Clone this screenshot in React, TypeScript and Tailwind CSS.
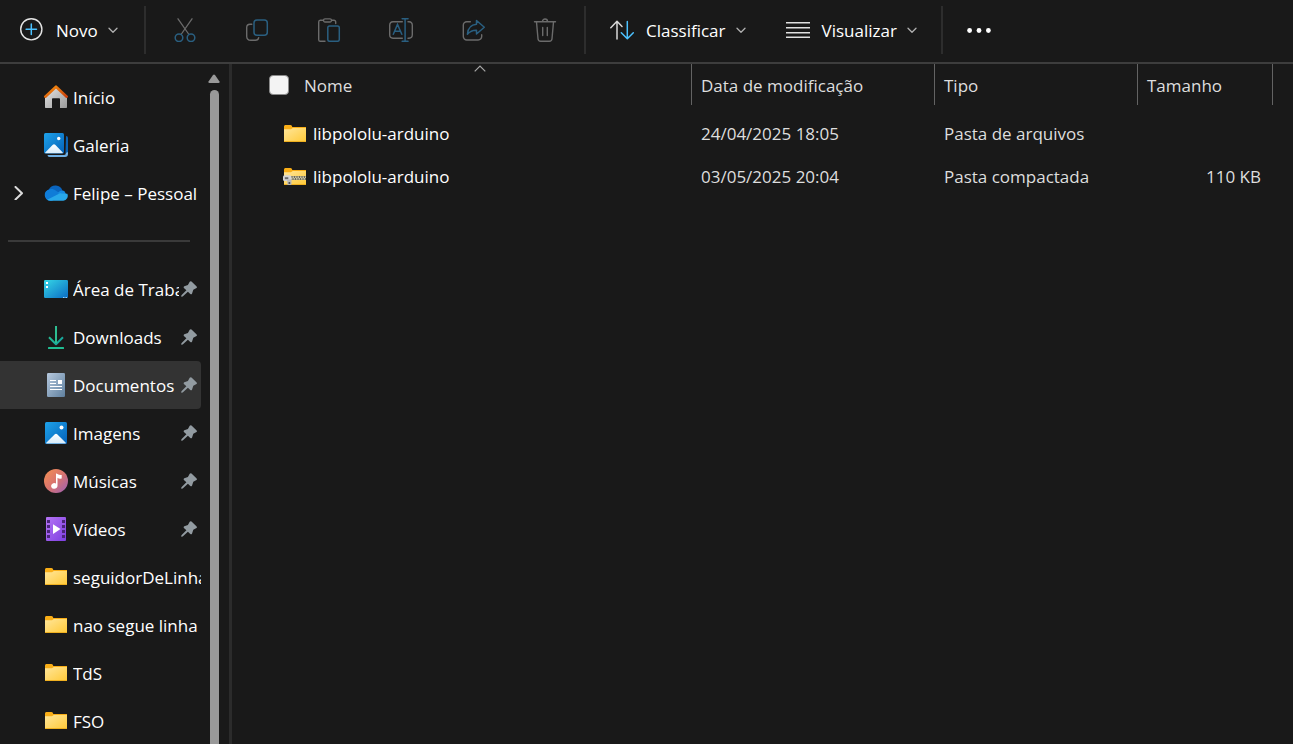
import type { ReactNode } from "react";

const GRAY = "#6b6b6b";
const BLUE = "#2a5f80";

function Gradients() {
  return (
    <svg width="0" height="0" className="absolute" aria-hidden="true">
      <defs>
        <linearGradient id="folder" x1="0" y1="0" x2="1" y2="1">
          <stop offset="0" stopColor="#ffe69a" />
          <stop offset="1" stopColor="#ffc937" />
        </linearGradient>
        <linearGradient id="roof" x1="0" y1="0" x2="1" y2="1">
          <stop offset="0" stopColor="#f9930f" />
          <stop offset="1" stopColor="#c9400c" />
        </linearGradient>
        <linearGradient id="wall" x1="0" y1="0" x2="1" y2="1">
          <stop offset="0" stopColor="#e6e6e6" />
          <stop offset="1" stopColor="#9a9a9a" />
        </linearGradient>
        <linearGradient id="photo" x1="0" y1="0" x2="1" y2="1">
          <stop offset="0" stopColor="#1ea2ea" />
          <stop offset="1" stopColor="#0461b8" />
        </linearGradient>
        <linearGradient id="hill" x1="0" y1="0" x2="0" y2="1">
          <stop offset="0" stopColor="#ffffff" />
          <stop offset="1" stopColor="#d5ebfb" />
        </linearGradient>
        <linearGradient id="desktop" x1="0" y1="0" x2="1" y2="1">
          <stop offset="0" stopColor="#35d6e6" />
          <stop offset="1" stopColor="#0b6cc4" />
        </linearGradient>
        <linearGradient id="download" x1="0" y1="0" x2="1" y2="1">
          <stop offset="0" stopColor="#2fc48a" />
          <stop offset="1" stopColor="#12a0a0" />
        </linearGradient>
        <linearGradient id="doc" x1="0" y1="0" x2="1" y2="1">
          <stop offset="0" stopColor="#b7c9de" />
          <stop offset="1" stopColor="#5f809f" />
        </linearGradient>
        <linearGradient id="music" x1="0" y1="0" x2="1" y2="1">
          <stop offset="0" stopColor="#f59150" />
          <stop offset="0.5" stopColor="#d9746f" />
          <stop offset="1" stopColor="#9a5fb8" />
        </linearGradient>
        <linearGradient id="video" x1="0" y1="0" x2="1" y2="1">
          <stop offset="0" stopColor="#b574f5" />
          <stop offset="1" stopColor="#7d3fe0" />
        </linearGradient>
      </defs>
    </svg>
  );
}

function Icon({ children, size = 24 }: { children: ReactNode; size?: number }) {
  return (
    <svg width={size} height={size} viewBox={`0 0 ${size} ${size}`} fill="none" className="shrink-0" aria-hidden="true">
      {children}
    </svg>
  );
}

const NewIcon = () => (
  <Icon>
    <circle cx="11.3" cy="11.3" r="10.6" stroke="#e4e4e4" strokeWidth="1.4" />
    <path d="M11.300 6.100v10.400M6.100 11.300h10.400" stroke="#4cc2ff" strokeWidth="1.500" strokeLinecap="round" />
  </Icon>
);

const CutIcon = () => (
  <Icon>
    <path d="M5 .8 15.600 16M19 .8 8.400 16" stroke={GRAY} strokeWidth="1.300" strokeLinecap="round" />
    <circle cx="6" cy="19.800" r="3.800" stroke={BLUE} strokeWidth="1.500" />
    <circle cx="18" cy="19.800" r="3.800" stroke={BLUE} strokeWidth="1.500" />
  </Icon>
);

const CopyIcon = () => (
  <Icon>
    <path d="M6.800 6.200H5A3.300 3.300 0 0 0 1.700 9.500V18.500A4 4 0 0 0 5.700 22.300H10.500A3.300 3.300 0 0 0 13.700 19.600" stroke={GRAY} strokeWidth="1.400" strokeLinecap="round" />
    <rect x="9" y="2" width="13.300" height="15.300" rx="3" stroke={BLUE} strokeWidth="1.500" />
  </Icon>
);

const PasteIcon = () => (
  <Icon>
    <path d="M6.500 2.300H3.300A1.700 1.700 0 0 0 1.700 4V21.700A1.700 1.700 0 0 0 3.300 23.300H8M14.500 2.300H17A1.700 1.700 0 0 1 18.700 4V5.500" stroke={GRAY} strokeWidth="1.400" strokeLinecap="round" />
    <rect x="6.500" y=".8" width="8" height="3.200" rx="1.500" stroke={GRAY} strokeWidth="1.300" />
    <rect x="10.800" y="8" width="11.500" height="15.300" rx="1.800" stroke={BLUE} strokeWidth="1.500" />
  </Icon>
);

const RenameIcon = () => (
  <Icon>
    <path d="M13.300 3.800H4A3.500 3.500 0 0 0 .7 7.300V16.700A3.500 3.500 0 0 0 4 20.200H13.300M19 3.800H20A3.500 3.500 0 0 1 23.300 7.300V16.700A3.500 3.500 0 0 1 20 20.200H19" stroke={GRAY} strokeWidth="1.400" strokeLinecap="round" />
    <path d="M4.300 16.300 8.500 6.500 12.800 16.300M5.700 13.200H11.400M13.200 .7H19M16.100 .7V23.300M13.200 23.300H19" stroke={BLUE} strokeWidth="1.500" strokeLinecap="round" />
  </Icon>
);

const ShareIcon = () => (
  <Icon>
    <path d="M9.300 3.800H5.800A3.500 3.500 0 0 0 2.300 7.300V18.500A3.500 3.500 0 0 0 5.800 22H17A3.500 3.500 0 0 0 20.700 18.500V16.700" stroke={GRAY} strokeWidth="1.400" strokeLinecap="round" />
    <path d="M15.500 2.500 23.300 9.300 15.500 16V12.200C11.500 12 9 13.300 6.400 16.200 6.900 10.600 9.900 6.700 15.500 6.300Z" stroke={BLUE} strokeWidth="1.500" strokeLinejoin="round" />
  </Icon>
);

const TrashIcon = () => (
  <Icon>
    <path d="M1.500 3.800H22.500M3.500 4 5 20.800A2.700 2.700 0 0 0 7.700 23.300H16.300A2.700 2.700 0 0 0 19 20.800L20.500 4M9.500 3.500A2.500 2.500 0 0 1 14.500 3.500M9.700 9.500V17.500M14.300 9.500V17.500" stroke={GRAY} strokeWidth="1.400" strokeLinecap="round" />
  </Icon>
);

const SortIcon = () => (
  <Icon>
    <path d="M7 21V3.500M.8 9.700 7 3.300 12 8.500" stroke="#d8d8d8" strokeWidth="1.500" strokeLinecap="round" strokeLinejoin="round" />
    <path d="M17.300 3.500V20.500M11.300 14.700 17.300 20.800 23.300 14.700" stroke="#4cc2ff" strokeWidth="1.500" strokeLinecap="round" strokeLinejoin="round" />
  </Icon>
);

const ViewIcon = () => (
  <Icon>
    <path d="M0 4.700H24M0 9.700H24M0 14.700H24M0 19.300H24" stroke="#e0e0e0" strokeWidth="1.400" />
  </Icon>
);

const MoreIcon = () => (
  <Icon>
    <circle cx="2.600" cy="12.500" r="2.400" fill="#fff" />
    <circle cx="12" cy="12.500" r="2.400" fill="#fff" />
    <circle cx="21.400" cy="12.500" r="2.400" fill="#fff" />
  </Icon>
);

const Chevron = () => (
  <Icon size={10}>
    <path d="M1 3.200 5 7.200 9 3.200" stroke="#b0b0b0" strokeWidth="1.300" strokeLinecap="round" strokeLinejoin="round" />
  </Icon>
);

const HomeIcon = () => (
  <Icon>
    <path d="M1 11.500 12 2 23 11.500V22.300A.7.700 0 0 1 22.300 23H16V14A.8.800 0 0 0 15.200 13.200H8.800A.8.800 0 0 0 8 14V23H1.700A.7.700 0 0 1 1 22.300Z" fill="url(#wall)" />
    <path d="M1.300 11.700 12 1.700 22.700 11.700" stroke="url(#roof)" strokeWidth="2.600" strokeLinecap="round" strokeLinejoin="round" />
  </Icon>
);

const GalleryIcon = () => (
  <Icon>
    <path d="M22 3A2 2 0 0 1 24 5V20H21.500Z" fill="#0c63b4" />
    <path d="M3.500 22H20A1.800 1.800 0 0 0 21.800 20L24 19V21A3 3 0 0 1 21 24H5.500A2 2 0 0 1 3.500 22Z" fill="#6fb0e6" />
    <rect width="20" height="20.500" rx="1.500" fill="url(#photo)" />
    <path d="M1 19.700 8.800 11.800Q10 10.800 11.200 11.800L19 19.700Q18.500 20.300 18 20.300H2Q1.400 20.300 1 19.700Z" fill="url(#hill)" />
    <circle cx="14.700" cy="5.500" r="1.700" fill="#fff" />
  </Icon>
);

const CloudIcon = () => (
  <Icon>
    <path d="M6 19.300A5.700 5.700 0 0 1 4.800 8.500 7.500 7.500 0 0 1 18.500 9.500L12 16Z" fill="#0a64bd" />
    <path d="M5.500 8.500C8 7.600 10 8.300 12 9.800L18.500 14 8 19.800H6A5.700 5.700 0 0 1 5.500 8.500Z" fill="#0f7cd8" />
    <path d="M14 11.800C16 9.300 19 9 20.500 10.300L23 15 15 14Z" fill="#168ae0" />
    <path d="M3.200 18.700 14.500 12.900Q16 12 17.500 12.500L23.300 12.700A5 5 0 0 1 19.300 19.800H6.500A5.500 5.500 0 0 1 3.200 18.700Z" fill="#28a8ea" />
  </Icon>
);

const DesktopIcon = () => (
  <Icon>
    <rect y="3" width="24" height="18" rx="1.200" fill="url(#desktop)" />
    <path d="M2 5h2v2H2zM2 9h2v2H2z" fill="#fff" />
    <path d="M19 20h1.500v1H19zM21.500 20H23v1h-1.500z" fill="#8fd0ff" />
  </Icon>
);

const DownloadIcon = () => (
  <Icon>
    <path d="M12 1V18.500M5 12.300 12 19.300 19 12.300" stroke="url(#download)" strokeWidth="2" strokeLinejoin="round" />
    <rect x="4" y="22" width="16" height="2" rx=".5" fill="#20bd92" />
    <rect x="11" y="1" width="2" height="17" fill="#2dbd91" />
  </Icon>
);

const DocumentIcon = () => (
  <Icon>
    <rect x="3" width="18" height="24" rx="1.300" fill="url(#doc)" />
    <path d="M6 7.500h6M6 10.500h6M6 13.500h12M6 16.500h12" stroke="#fff" strokeWidth="1.100" />
    <rect x="14" y="7" width="4" height="4" fill="#fff" />
  </Icon>
);

const PictureIcon = () => (
  <Icon>
    <rect x="1" y="1" width="22" height="22" rx="1.500" fill="url(#photo)" />
    <path d="M2 22 10.800 13.200Q12 12.200 13.200 13.200L22 22Q21.500 22.500 21 22.500H3Q2.400 22.500 2 22Z" fill="url(#hill)" />
    <circle cx="17.500" cy="6.500" r="2" fill="#fff" />
  </Icon>
);

const MusicIcon = () => (
  <Icon>
    <circle cx="12" cy="12" r="12" fill="url(#music)" />
    <path d="M12 4.500Q12.800 4.200 13.500 5 15 6.200 17.700 6V9.500Q15 10 13.500 8.800V16.800A3.200 2.900 0 1 1 12 14.500Z" fill="#fff" />
  </Icon>
);

const VideoIcon = () => (
  <Icon>
    <rect x="2" width="20" height="24" rx="1" fill="url(#video)" />
    <path d="M3 3h3v3H3zM3 8h3v3H3zM3 13h3v3H3zM3 18h3v3H3zM18 3h3v3h-3zM18 8h3v3h-3zM18 13h3v3h-3zM18 18h3v3h-3z" fill="#4a2579" />
    <path d="M9 7.200 16.500 12 9 17Z" fill="#fff" />
  </Icon>
);

const FolderShape = () => (
  <>
    <path d="M1 4.500Q1 3 2.200 3H7.500Q9 3 9.300 5H23V9H1Z" fill="#f9ae17" />
    <path d="M1 7.200H8L9.800 6H23V19.400Q23 20 22.400 20H1.600Q1 20 1 19.400Z" fill="url(#folder)" />
    <path d="M1 19H23V19.400Q23 20 22.400 20H1.600Q1 20 1 19.400Z" fill="#efb020" />
  </>
);

const FolderIcon = () => (
  <Icon>
    <FolderShape />
  </Icon>
);

const ZipIcon = () => (
  <Icon>
    <FolderShape />
    <rect x="7" y="11" width="16" height="4" fill="#6e6a58" />
    <path d="M7 12.200H23" stroke="#e9e2bd" strokeWidth="1.300" strokeDasharray="1.500 1" />
    <path d="M8 13.900H23" stroke="#e9e2bd" strokeWidth="1.300" strokeDasharray="1.500 1" />
    <rect x="0" y="10.300" width="8.300" height="5.700" rx="1.600" fill="#d5d5d5" />
    <rect x="1.800" y="12.200" width="3.500" height="2" fill="#6b6b6b" />
    <rect x="4.300" y="14.500" width="4.200" height="5.500" rx="1" fill="#bababa" />
    <circle cx="6.400" cy="17.900" r="1" fill="#4c4c4c" />
  </Icon>
);

const PinIcon = () => (
  <Icon size={16}>
    <path d="M8.700.800Q9.500-.2 10.500.6L15.400 5.200Q16.400 6.200 15.500 7L12.300 8.800 11 12.700Q10.300 13.800 9.300 12.900L6.900 10.700 1.700 15.500.2 15.800.4 14.300 5.400 9.200 2.900 6.900Q2.200 5.900 3.300 5.200L6.900 4Z" fill="#929ba1" />
  </Icon>
);

interface NavEntry {
  label: string;
  icon: ReactNode;
  pinned?: boolean;
  active?: boolean;
  expandable?: boolean;
}

const home: NavEntry[] = [
  { label: "Início", icon: <HomeIcon /> },
  { label: "Galeria", icon: <GalleryIcon /> },
  { label: "Felipe – Pessoal", icon: <CloudIcon />, expandable: true },
];

const places: NavEntry[] = [
  { label: "Área de Trabalho", icon: <DesktopIcon />, pinned: true },
  { label: "Downloads", icon: <DownloadIcon />, pinned: true },
  { label: "Documentos", icon: <DocumentIcon />, pinned: true, active: true },
  { label: "Imagens", icon: <PictureIcon />, pinned: true },
  { label: "Músicas", icon: <MusicIcon />, pinned: true },
  { label: "Vídeos", icon: <VideoIcon />, pinned: true },
  { label: "seguidorDeLinha", icon: <FolderIcon /> },
  { label: "nao segue linha", icon: <FolderIcon /> },
  { label: "TdS", icon: <FolderIcon /> },
  { label: "FSO", icon: <FolderIcon /> },
];

function NavItem({ label, icon, pinned, active, expandable }: NavEntry) {
  return (
    <li className={active ? "flex h-12 items-center rounded-r-sm bg-[#333333]" : "flex h-12 items-center"}>
      <span className="flex w-11 shrink-0 pl-3">
        {expandable && (
          <button type="button" aria-label="Expandir" className="flex">
            <Icon size={14}>
              <path d="M3.500 1 10 7.200 3.500 13.500" stroke="#dcdcdc" strokeWidth="2" strokeLinecap="round" strokeLinejoin="round" />
            </Icon>
          </button>
        )}
      </span>
      <a href="#" className="flex min-w-0 flex-1 items-center gap-[5px]">
        {icon}
        <span className="min-w-0 flex-1 overflow-hidden whitespace-nowrap pt-0.5">{label}</span>
      </a>
      {pinned && (
        <span className="shrink-0 pl-0.5 pr-1">
          <PinIcon />
        </span>
      )}
    </li>
  );
}

const Divider = () => <div className="h-12 w-0.5 shrink-0 bg-[#2d2d2d]" />;

const actions: { label: string; icon: ReactNode }[] = [
  { label: "Recortar", icon: <CutIcon /> },
  { label: "Copiar", icon: <CopyIcon /> },
  { label: "Colar", icon: <PasteIcon /> },
  { label: "Renomear", icon: <RenameIcon /> },
  { label: "Compartilhar", icon: <ShareIcon /> },
  { label: "Excluir", icon: <TrashIcon /> },
];

function MenuLabel({ children }: { children: ReactNode }) {
  return (
    <span className="flex items-center gap-[10px]">
      <span className="pt-0.5">{children}</span>
      <Chevron />
    </span>
  );
}

function Toolbar() {
  return (
    <header className="flex h-16 shrink-0 items-center border-b-2 border-[#3d3d3d] pb-0.5 text-white">
      <button type="button" className="flex w-36 items-center gap-3 pl-5">
        <NewIcon />
        <MenuLabel>Novo</MenuLabel>
      </button>
      <Divider />
      <div className="flex px-[3px]">
        {actions.map((a) => (
          <button key={a.label} type="button" aria-label={a.label} className="flex w-18 justify-center">
            {a.icon}
          </button>
        ))}
      </div>
      <Divider />
      <button type="button" className="flex items-center gap-3 pl-6 pr-4">
        <SortIcon />
        <MenuLabel>Classificar</MenuLabel>
      </button>
      <button type="button" className="flex items-center gap-3 px-6">
        <ViewIcon />
        <MenuLabel>Visualizar</MenuLabel>
      </button>
      <Divider />
      <button type="button" aria-label="Ver mais" className="flex w-18 justify-center">
        <MoreIcon />
      </button>
    </header>
  );
}

const files = [
  { name: "libpololu-arduino", date: "24/04/2025 18:05", type: "Pasta de arquivos", size: "", icon: <FolderIcon /> },
  { name: "libpololu-arduino", date: "03/05/2025 20:04", type: "Pasta compactada", size: "110 KB", icon: <ZipIcon /> },
];

function HeaderCell({ children }: { children: ReactNode }) {
  return (
    <th className="p-0 pb-[7px] text-left font-normal">
      <div className="flex h-[41px] items-center border-r border-[#636363] pl-[9px] pt-0.5">{children}</div>
    </th>
  );
}

function FileTable() {
  return (
    <table className="w-full table-fixed border-collapse whitespace-nowrap text-[#dedede]">
      <colgroup>
        <col />
        <col className="w-[243px]" />
        <col className="w-[203px]" />
        <col className="w-[135px]" />
      </colgroup>
      <thead>
        <tr>
          <th className="p-0 pb-[7px] pl-[37px] text-left font-normal">
            <div className="relative flex h-[41px] items-center border-r border-[#636363]">
              <label className="flex items-center gap-[15px]">
                <input
                  type="checkbox"
                  className="size-5 appearance-none rounded border border-[#8a8a8a] bg-[#f3f3f3]"
                />
                <span className="pt-0.5">Nome</span>
              </label>
              <svg width="12" height="7" viewBox="0 0 12 7" fill="none" className="absolute left-1/2 top-px -translate-x-1/2" aria-hidden="true">
                <path d="M.7 6.300 6 1 11.300 6.300" stroke="#a8a8a8" strokeWidth="1.200" />
              </svg>
            </div>
          </th>
          <HeaderCell>Data de modificação</HeaderCell>
          <HeaderCell>Tipo</HeaderCell>
          <HeaderCell>Tamanho</HeaderCell>
        </tr>
      </thead>
      <tbody>
        {files.map((f) => (
          <tr key={f.type} className="h-[43px]">
            <td className="p-0 pl-[51px] text-white">
              <span className="flex items-center gap-[6px]">
                {f.icon}
                {f.name}
              </span>
            </td>
            <td className="p-0 pl-[9px]">{f.date}</td>
            <td className="p-0 pl-[9px]">{f.type}</td>
            <td className="p-0 pr-3 text-right">{f.size}</td>
          </tr>
        ))}
      </tbody>
    </table>
  );
}

export default function App() {
  return (
    <div className="flex h-screen flex-col overflow-hidden bg-[#191919] font-['Segoe_UI','Open_Sans',sans-serif] text-[17px] leading-6">
      <Gradients />
      <Toolbar />
      <div className="flex min-h-0 flex-1">
        <aside className="flex w-[229px] shrink-0 overflow-hidden">
          <nav className="min-w-0 flex-1 pt-[9px] text-white">
            <ul>
              {home.map((e) => (
                <NavItem key={e.label} {...e} />
              ))}
            </ul>
            <div className="flex h-12 items-center pl-2 pr-[11px]">
              <hr className="h-0.5 flex-1 border-0 bg-[#3a3a3a]" />
            </div>
            <ul>
              {places.map((e) => (
                <NavItem key={e.label} {...e} />
              ))}
            </ul>
          </nav>
          <div className="flex w-7 shrink-0 flex-col items-center gap-[7px] pr-0.5 pt-[10px]">
            <svg width="12" height="9" viewBox="0 0 12 9" aria-hidden="true">
              <path d="M5 1Q6 0 7 1L11.500 7.500Q12 9 10.500 9H1.500Q0 9 .5 7.500Z" fill="#999" />
            </svg>
            <div className="w-[9px] flex-1 rounded-t-full bg-[#999999]" />
          </div>
        </aside>
        <div className="w-[3px] shrink-0 bg-[#2b2b2b]" />
        <main className="min-w-0 flex-1 pr-5">
          <FileTable />
        </main>
      </div>
    </div>
  );
}
